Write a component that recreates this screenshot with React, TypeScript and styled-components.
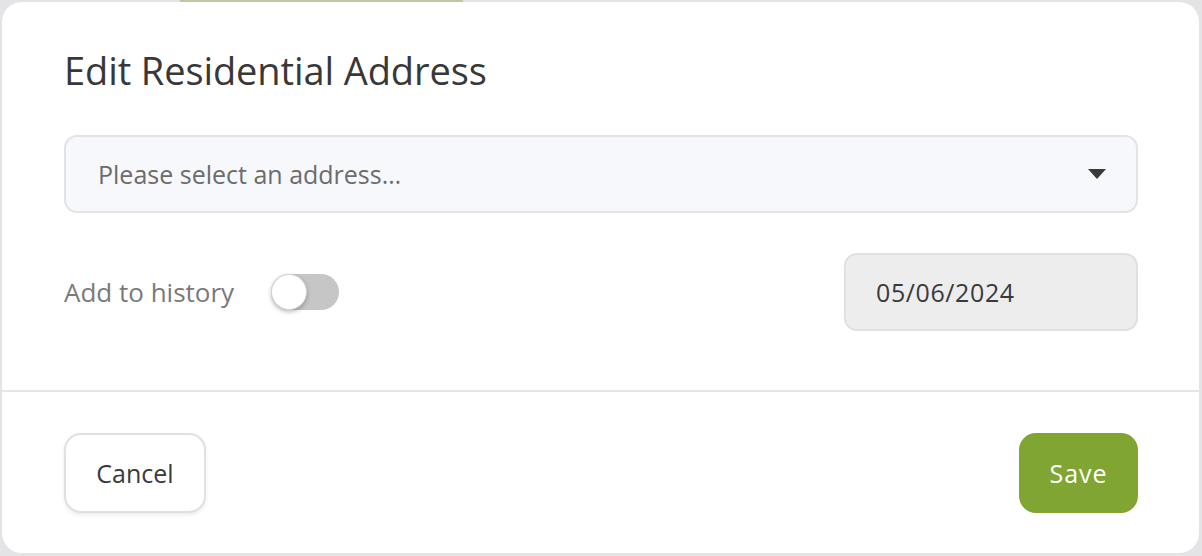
import React, { useState } from "react";
import styled, { createGlobalStyle } from "styled-components";

const GlobalStyle = createGlobalStyle`
    html, body {
        margin: 0;
        padding: 0;
        background: #e4e4e6;
        font-family: "Open Sans", "Lato", sans-serif;
    }
    * {
        box-sizing: border-box;
    }
`;

const Page = styled.div`
    width: 1202px;
    height: 556px;
    padding: 0 3px 3px 2px;
    display: flex;
    flex-direction: column;
`;

const Backdrop = styled.div`
    height: 2px;
    display: flex;
    padding-left: 178px;
`;

const BehindTab = styled.div`
    width: 283px;
    height: 2px;
    background: #bdc8a6;
`;

const Card = styled.div`
    flex: 1;
    background: #ffffff;
    border-radius: 20px;
    display: flex;
    flex-direction: column;
    overflow: hidden;
`;

const Body = styled.div`
    padding: 46px 61px 0 62px;
    display: flex;
    flex-direction: column;
    height: 390px;
    border-bottom: 2px solid #e6e6ea;
`;

const Title = styled.h2`
    margin: 0 0 43px;
    font-size: 38px;
    line-height: 44px;
    font-weight: 400;
    color: #383838;
    letter-spacing: -0.1px;
`;

const SelectBox = styled.button`
    height: 78px;
    width: 100%;
    border: 2px solid #e3e3e6;
    border-radius: 13px;
    background: #f7f8fc;
    display: flex;
    align-items: center;
    justify-content: space-between;
    padding: 0 30px 0 32px;
    font-family: inherit;
    font-size: 25px;
    color: #6c6c6c;
    cursor: pointer;
`;

const Caret = styled.span`
    width: 0;
    height: 0;
    border-left: 9px solid transparent;
    border-right: 9px solid transparent;
    border-top: 10px solid #3a3a3a;
`;

const OptionsRow = styled.div`
    margin-top: 40px;
    display: flex;
    align-items: center;
    justify-content: space-between;
`;

const HistoryGroup = styled.label`
    display: flex;
    align-items: center;
    gap: 37px;
    font-size: 26px;
    color: #7a7a7a;
    cursor: pointer;
`;

const Track = styled.span<{ $on: boolean }>`
    position: relative;
    width: 68px;
    height: 36px;
    border-radius: 18px;
    background: ${p => (p.$on ? "#80a532" : "#c6c6c6")};
    transition: background 0.2s;
`;

const Knob = styled.span<{ $on: boolean }>`
    position: absolute;
    top: 0;
    left: ${p => (p.$on ? "32px" : "0")};
    width: 36px;
    height: 36px;
    border-radius: 50%;
    background: #ffffff;
    border: 1px solid #d6d6d6;
    box-shadow: 0 2px 4px rgba(0, 0, 0, 0.25);
    transition: left 0.2s;
`;

const DateField = styled.div`
    width: 294px;
    height: 78px;
    border: 2px solid #e0e0e0;
    border-radius: 13px;
    background: #ededed;
    display: flex;
    align-items: center;
    padding-left: 30px;
    font-size: 25px;
    letter-spacing: 0.6px;
    color: #3a3a3a;
`;

const Footer = styled.div`
    flex: 1;
    display: flex;
    align-items: center;
    justify-content: space-between;
    padding: 0 61px 0 62px;
`;

const Button = styled.button<{ $primary?: boolean }>`
    height: 80px;
    padding: 0;
    border-radius: 17px;
    font-family: inherit;
    font-size: 25px;
    letter-spacing: ${p => (p.$primary ? "1px" : "0")};
    cursor: pointer;
    border: ${p => (p.$primary ? "none" : "2px solid #e0e0e0")};
    background: ${p => (p.$primary ? "#80a532" : "#ffffff")};
    color: ${p => (p.$primary ? "#ffffff" : "#3a3a3a")};
    box-shadow: ${p => (p.$primary ? "none" : "0 2px 4px rgba(0, 0, 0, 0.08)")};
    width: ${p => (p.$primary ? "119px" : "142px")};
`;

export default function App() {
    const [history, setHistory] = useState(false);

    return (
        <>
            <GlobalStyle />
            <Page>
                <Backdrop>
                    <BehindTab />
                </Backdrop>
                <Card>
                    <Body>
                        <Title>Edit Residential Address</Title>
                        <SelectBox type="button">
                            <span>Please select an address…</span>
                            <Caret />
                        </SelectBox>
                        <OptionsRow>
                            <HistoryGroup onClick={() => setHistory(!history)}>
                                Add to history
                                <Track $on={history}>
                                    <Knob $on={history} />
                                </Track>
                            </HistoryGroup>
                            <DateField>05/06/2024</DateField>
                        </OptionsRow>
                    </Body>
                    <Footer>
                        <Button type="button">Cancel</Button>
                        <Button type="button" $primary>
                            Save
                        </Button>
                    </Footer>
                </Card>
            </Page>
        </>
    );
}
